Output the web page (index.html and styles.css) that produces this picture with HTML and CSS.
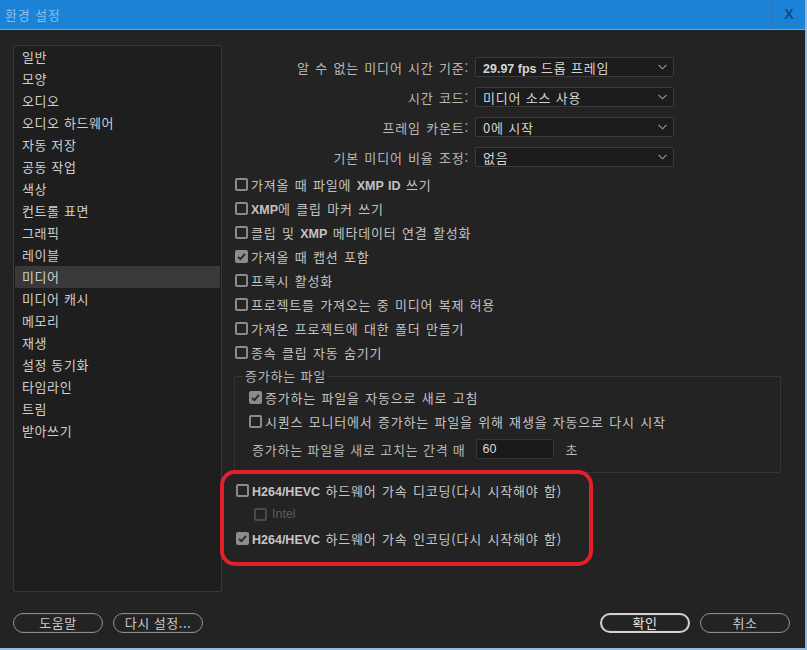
FILE: index.html
```html
<!DOCTYPE html>
<html lang="ko">
<head>
<meta charset="utf-8">
<title>환경 설정</title>
<link rel="stylesheet" href="styles.css">
</head>
<body>
<div class="window">
  <div class="titlebar">
    <span class="title">환경 설정</span>
    <span class="close">X</span>
  </div>
  <div class="body">
    <ul class="sidebar">
      <li>일반</li>
      <li>모양</li>
      <li>오디오</li>
      <li>오디오 하드웨어</li>
      <li>자동 저장</li>
      <li>공동 작업</li>
      <li>색상</li>
      <li>컨트롤 표면</li>
      <li>그래픽</li>
      <li>레이블</li>
      <li class="selected">미디어</li>
      <li>미디어 캐시</li>
      <li>메모리</li>
      <li>재생</li>
      <li>설정 동기화</li>
      <li>타임라인</li>
      <li>트림</li>
      <li>받아쓰기</li>
    </ul>
    <div class="main">
      <div class="fields">
        <span class="flabel">알 수 없는 미디어 시간 기준:</span>
        <div class="select"><span><span class="en">29.97 fps</span> 드롭 프레임</span><svg class="chev" width="9" height="6" viewBox="0 0 9 6"><path d="M0.5 0.8 L4.5 4.8 L8.5 0.8" fill="none" stroke="#9a9a9a" stroke-width="1.1"/></svg></div>
        <span class="flabel">시간 코드:</span>
        <div class="select"><span>미디어 소스 사용</span><svg class="chev" width="9" height="6" viewBox="0 0 9 6"><path d="M0.5 0.8 L4.5 4.8 L8.5 0.8" fill="none" stroke="#9a9a9a" stroke-width="1.1"/></svg></div>
        <span class="flabel">프레임 카운트:</span>
        <div class="select"><span>0에 시작</span><svg class="chev" width="9" height="6" viewBox="0 0 9 6"><path d="M0.5 0.8 L4.5 4.8 L8.5 0.8" fill="none" stroke="#9a9a9a" stroke-width="1.1"/></svg></div>
        <span class="flabel">기본 미디어 비율 조정:</span>
        <div class="select"><span>없음</span><svg class="chev" width="9" height="6" viewBox="0 0 9 6"><path d="M0.5 0.8 L4.5 4.8 L8.5 0.8" fill="none" stroke="#9a9a9a" stroke-width="1.1"/></svg></div>
      </div>

      <div class="checks">
        <div class="check"><span class="box"></span><span>가져올 때 파일에 <span class="en">XMP ID</span> 쓰기</span></div>
        <div class="check"><span class="box"></span><span><span class="en">XMP</span>에 클립 마커 쓰기</span></div>
        <div class="check"><span class="box"></span><span>클립 및 <span class="en">XMP</span> 메타데이터 연결 활성화</span></div>
        <div class="check"><span class="box on"><svg width="13" height="13" viewBox="0 0 13 13"><path d="M3 6.8 L5.4 9.2 L10 3.8" fill="none" stroke="#262626" stroke-width="1.8"/></svg></span><span>가져올 때 캡션 포함</span></div>
        <div class="check"><span class="box"></span><span>프록시 활성화</span></div>
        <div class="check"><span class="box"></span><span>프로젝트를 가져오는 중 미디어 복제 허용</span></div>
        <div class="check"><span class="box"></span><span>가져온 프로젝트에 대한 폴더 만들기</span></div>
        <div class="check"><span class="box"></span><span>종속 클립 자동 숨기기</span></div>
      </div>

      <fieldset class="group">
        <legend>증가하는 파일</legend>
        <div class="check inset"><span class="box on"><svg width="13" height="13" viewBox="0 0 13 13"><path d="M3 6.8 L5.4 9.2 L10 3.8" fill="none" stroke="#262626" stroke-width="1.8"/></svg></span><span>증가하는 파일을 자동으로 새로 고침</span></div>
        <div class="check inset"><span class="box"></span><span>시퀀스 모니터에서 증가하는 파일을 위해 재생을 자동으로 다시 시작</span></div>
        <div class="interval">
          <span>증가하는 파일을 새로 고치는 간격 매</span>
          <span class="num">60</span>
          <span class="unit">초</span>
        </div>
      </fieldset>

      <div class="hw">
        <div class="check"><span class="box"></span><span class="strong"><span class="en">H264/HEVC</span> 하드웨어 가속 디코딩(다시 시작해야 함)</span></div>
        <div class="check sub disabled"><span class="box"></span><span class="en-light">Intel</span></div>
        <div class="check"><span class="box on"><svg width="13" height="13" viewBox="0 0 13 13"><path d="M3 6.8 L5.4 9.2 L10 3.8" fill="none" stroke="#262626" stroke-width="1.8"/></svg></span><span class="strong"><span class="en">H264/HEVC</span> 하드웨어 가속 인코딩(다시 시작해야 함)</span></div>
      </div>
    </div>
  </div>
  <div class="footer">
    <div class="btns">
      <button class="btn">도움말</button>
      <button class="btn">다시 설정...</button>
    </div>
    <div class="btns">
      <button class="btn primary">확인</button>
      <button class="btn">취소</button>
    </div>
  </div>
</div>
</body>
</html>
```

FILE: styles.css
```css
* { box-sizing: border-box; }
html, body {
  margin: 0;
  padding: 0;
  background: #232323;
}
body {
  width: 807px;
  height: 650px;
  overflow: hidden;
  font-family: "Noto Sans CJK KR", "Noto Sans", sans-serif;
  font-size: 13px;
  letter-spacing: 0.8px;
  color: #c4c4c4;
}
.window {
  width: 807px;
  height: 650px;
  border-right: 2px solid #93b9de;
  border-bottom: 2px solid #93b9de;
  display: flex;
  flex-direction: column;
  background: #232323;
}
.titlebar {
  height: 30px;
  flex: none;
  background: #1b82d6;
  border-bottom: 1px solid #6aa8e2;
  display: flex;
  align-items: stretch;
  justify-content: space-between;
}
.title {
  color: #8dbfe9;
  padding-left: 5px;
  line-height: 29px;
  font-size: 13px;
}
.close {
  width: 33px;
  border-left: 1px solid #2d74bb;
  color: #0d4a86;
  font-family: "Liberation Sans", sans-serif;
  font-weight: bold;
  font-size: 14px;
  line-height: 29px;
  text-align: center;
  letter-spacing: 0;
}
.body {
  display: flex;
  padding: 15px 0 0 13px;
  height: 562px;
  flex: none;
}
.sidebar {
  list-style: none;
  margin: 0;
  padding: 0;
  width: 209px;
  height: 547px;
  flex: none;
  background: #1e1e1e;
  border: 1px solid #383838;
  border-radius: 2px;
  color: #cfcfcf;
  letter-spacing: 0.6px;
}
.sidebar li {
  height: 22px;
  line-height: 22px;
  padding-left: 7px;
  margin: 0 1px;
}
.sidebar li.selected {
  background: #393939;
}
.main {
  flex: 1;
  padding: 12px 0 0 13px;
  display: flex;
  flex-direction: column;
}
.fields {
  display: grid;
  grid-template-columns: 234px 199px;
  column-gap: 6px;
  row-gap: 10px;
  align-items: center;
}
.flabel {
  justify-self: end;
  color: #b8b8b8;
  word-spacing: 1px;
  white-space: nowrap;
}
.select {
  height: 20px;
  background: #1c1c1c;
  border: 1px solid #3a3a3a;
  border-radius: 2px;
  display: flex;
  align-items: center;
  justify-content: space-between;
  padding: 0 6px 0 7px;
  color: #d4d4d4;
  white-space: nowrap;
}
.chev { flex: none; }
.en {
  font-family: "Liberation Sans", sans-serif;
  font-weight: bold;
  font-size: 12.5px;
  letter-spacing: 0;
}
.checks {
  margin-top: 5px;
  display: flex;
  flex-direction: column;
}
.check {
  height: 24px;
  display: flex;
  align-items: center;
  gap: 3px;
  white-space: nowrap;
  color: #c2c2c2;
  word-spacing: 1px;
}
.box {
  width: 13px;
  height: 13px;
  flex: none;
  border: 2px solid #8a8a8a;
  border-radius: 2px;
  display: flex;
}
.box.on {
  background: #8c8c8c;
  border-color: #8c8c8c;
}
.box.on svg {
  margin: -2px;
}
.group {
  margin: 4px 0 0 -1px;
  width: 547px;
  border: 1px solid #353535;
  border-radius: 2px;
  padding: 1px 8px 11px 8px;
}
.group legend {
  padding: 0 2px;
  line-height: 16px;
  color: #b8b8b8;
}
.check.inset {
  padding-left: 6px;
}
.interval {
  margin-top: 4px;
  height: 24px;
  display: flex;
  align-items: center;
  padding-left: 9px;
  color: #b8b8b8;
  white-space: nowrap;
}
.num {
  margin-left: 10px;
  width: 78px;
  height: 20px;
  background: #1a1a1a;
  border: 1px solid #353535;
  border-radius: 2px;
  line-height: 18px;
  padding-left: 6px;
  color: #d8d8d8;
  font-family: "Liberation Sans", sans-serif;
  font-size: 12.5px;
  letter-spacing: 0;
}
.unit {
  margin-left: 12px;
}
.hw {
  margin: -3px 0 0 -15px;
  width: 373px;
  border: 4px solid #e41f2b;
  border-radius: 15px;
  padding: 4px 0 12px 12px;
  display: flex;
  flex-direction: column;
}
.hw .strong {
  color: #c6c6c6;
}
.check.sub {
  padding-left: 18px;
  gap: 5px;
}
.check.disabled .box {
  border-color: #4a4a4a;
}
.en-light {
  font-family: "Liberation Sans", sans-serif;
  font-size: 12.5px;
  color: #5c5c5c;
  letter-spacing: 0;
}
.footer {
  display: flex;
  justify-content: space-between;
  padding: 21px 15px 0 13px;
}
.btns {
  display: flex;
  gap: 10px;
}
.btn {
  width: 90px;
  height: 20px;
  border: 1px solid #8e8e8e;
  border-radius: 10px;
  background: #232323;
  color: #c8c8c8;
  font-family: "Noto Sans CJK KR", sans-serif;
  font-size: 13px;
  line-height: 16px;
  padding: 0;
  letter-spacing: 0.5px;
  box-shadow: inset 0 0 0 1px #2e2e2e;
}
.btn.primary {
  border: 2px solid #d2d2d2;
  color: #e8e8e8;
}
```
